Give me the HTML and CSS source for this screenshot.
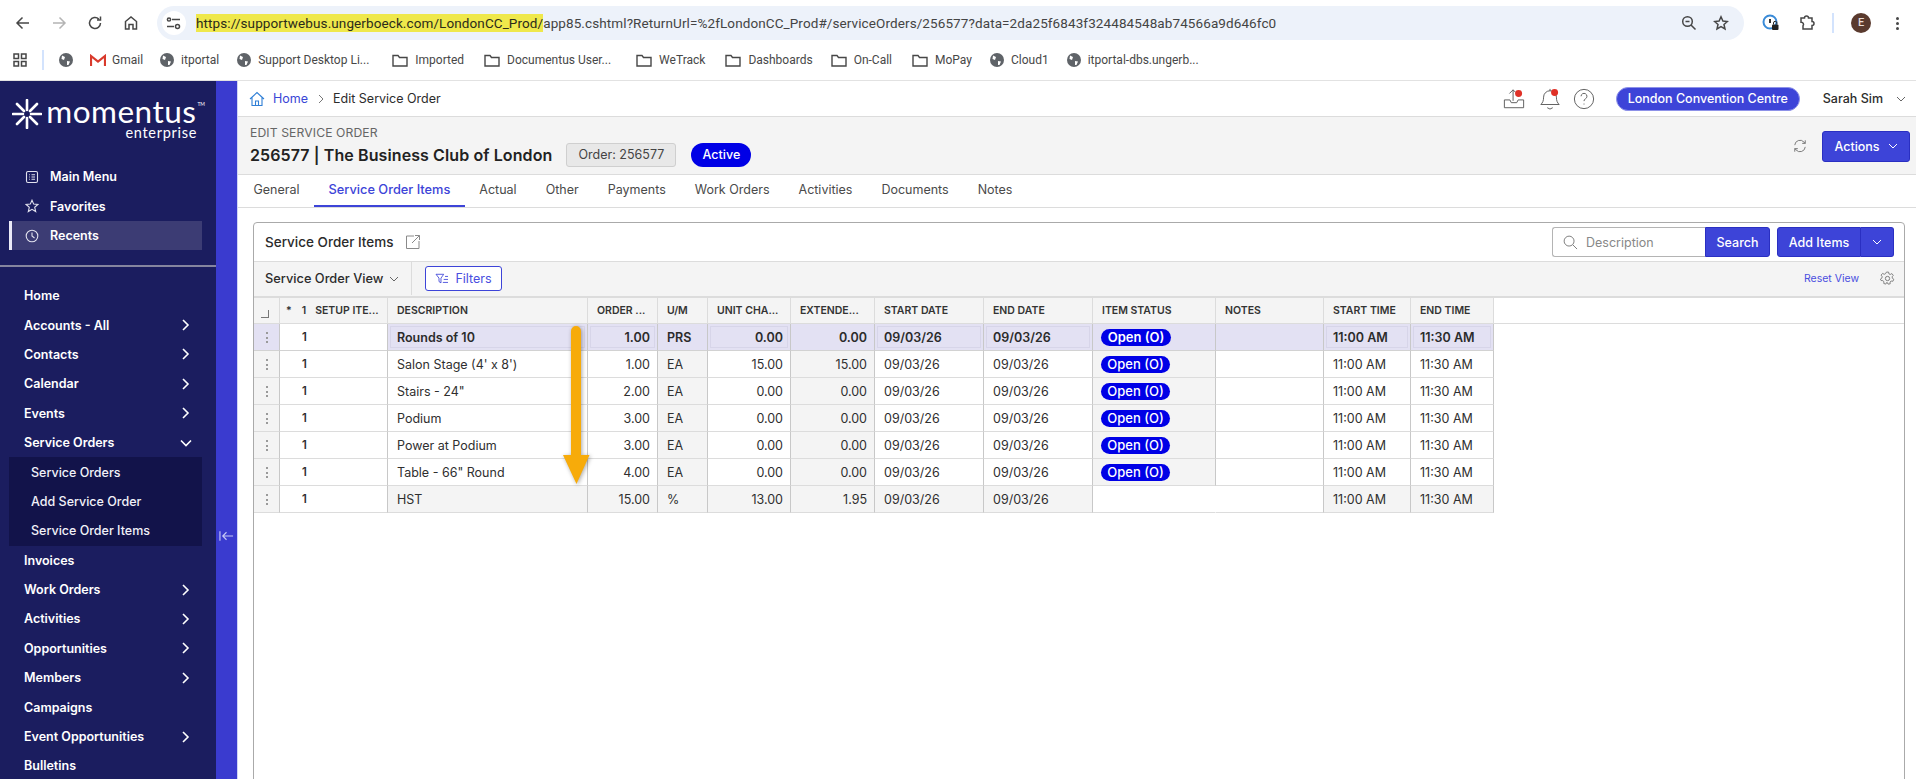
FILE: index.html
```html
<!DOCTYPE html>
<html lang="en">
<head>
<meta charset="utf-8">
<title>Edit Service Order</title>
<link rel="stylesheet" href="styles.css">
</head>
<body>
<header class="chrome">
  <div class="toolbar">
    <span class="nav-btn"><svg viewBox="0 0 16 16" class="ic16 stroke-dark"><path d="M14 8H2M7.5 2.5 2 8l5.5 5.5"/></svg></span>
    <span class="nav-btn"><svg viewBox="0 0 16 16" class="ic16 stroke-faint"><path d="M2 8h12M8.500 2.500 14 8l-5.500 5.500"/></svg></span>
    <span class="nav-btn"><svg viewBox="0 0 16 16" class="ic16 stroke-dark"><path d="M13.500 8a5.500 5.500 0 1 1-1.700-4M13.500 1.500V5H10"/></svg></span>
    <span class="nav-btn"><svg viewBox="0 0 16 16" class="ic16 stroke-dark"><path d="M2.500 14V6.500L8 2l5.500 4.500V14H10V9.500H6V14z"/></svg></span>
    <div class="urlbar">
      <span class="site-btn"><svg viewBox="0 0 16 16" class="ic16 stroke-dark"><path d="M6 4.500h8M1 11.500h7"/><circle cx="3" cy="4.500" r="1.600"/><circle cx="11.500" cy="11.500" r="2"/></svg></span>
      <span class="url"><span class="url-hl">https://supportwebus.ungerboeck.com/LondonCC_Prod/</span>app85.cshtml?ReturnUrl=%2fLondonCC_Prod#/serviceOrders/256577?data=2da25f6843f324484548ab74566a9d646fc0</span>
      <span class="url-tools">
        <span class="url-tool"><svg viewBox="0 0 16 16" class="ic16 stroke-dark"><circle cx="6.500" cy="6.500" r="4.800"/><path d="M10 10l4.500 4.500M4.500 6.500h4"/></svg></span>
        <span class="url-tool"><svg viewBox="0 0 16 16" class="ic16 stroke-dark"><path d="M8 1.800l1.900 4.200 4.500.5-3.400 3 1 4.500L8 11.700 4 14l1-4.500-3.400-3 4.500-.5z"/></svg></span>
      </span>
    </div>
    <div class="ext-group">
      <span class="ext"><svg viewBox="0 0 18 18" class="ic18"><circle cx="8" cy="8" r="6.500" fill="none" stroke="#3a8bd8" stroke-width="2"/><path d="M8 5v4" stroke="#333" stroke-width="2"/><rect x="10" y="10.500" width="6.500" height="5.500" rx="1" fill="#222"/><path d="M11.500 10.500V9a1.700 1.700 0 0 1 3.400 0v1.500" fill="none" stroke="#222"/></svg></span>
      <span class="ext"><svg viewBox="0 0 18 18" class="ic18 stroke-dark"><path d="M3 4h3.500a2 2 0 0 1 4 0H14v3.500a2 2 0 0 1 0 4V15H5v-3.200a2.200 2.200 0 0 0-2-3.600z"/></svg></span>
      <span class="ext-sep"></span>
      <span class="avatar-slot"><span class="avatar">E</span></span>
      <span class="more"><i></i><i></i><i></i></span>
    </div>
  </div>
  <nav class="bookmarks">
    <svg viewBox="0 0 14 14" class="apps"><path d="M1 1h4.500v4.500H1zM8.500 1H13v4.500H8.500zM1 8.500h4.500V13H1zM8.500 8.500H13V13H8.500z"/></svg>
    <span class="bm-sep"></span>
    <span class="bm bm-solo"><svg viewBox="0 0 14 14" class="globe"><circle cx="7" cy="7" r="7"/><path class="gl" d="M3 2.500 6 4 5 7 2.500 6zM8 8l3 .5-1.500 3.500L8 12z"/></svg></span>
    <span class="bm bm-gmail"><svg viewBox="0 0 16 13" class="gmail"><path d="M1 12V2l7 5.500L15 2v10" fill="none" stroke="#d93a2c" stroke-width="2.200"/></svg>Gmail</span>
    <span class="bm"><svg viewBox="0 0 14 14" class="globe"><circle cx="7" cy="7" r="7"/><path class="gl" d="M3 2.500 6 4 5 7 2.500 6zM8 8l3 .5-1.500 3.500L8 12z"/></svg>itportal</span>
    <span class="bm bm-m23"><svg viewBox="0 0 14 14" class="globe"><circle cx="7" cy="7" r="7"/><path class="gl" d="M3 2.500 6 4 5 7 2.500 6zM8 8l3 .5-1.500 3.500L8 12z"/></svg>Support Desktop Li...</span>
    <span class="bm bm-m20"><svg viewBox="0 0 16 13" class="folder"><path d="M1 12V1.500h5l1.500 2H15V12z"/></svg>Imported</span>
    <span class="bm bm-m25"><svg viewBox="0 0 16 13" class="folder"><path d="M1 12V1.500h5l1.500 2H15V12z"/></svg>Documentus User...</span>
    <span class="bm bm-m20"><svg viewBox="0 0 16 13" class="folder"><path d="M1 12V1.500h5l1.500 2H15V12z"/></svg>WeTrack</span>
    <span class="bm"><svg viewBox="0 0 16 13" class="folder"><path d="M1 12V1.500h5l1.500 2H15V12z"/></svg>Dashboards</span>
    <span class="bm bm-m20"><svg viewBox="0 0 16 13" class="folder"><path d="M1 12V1.500h5l1.500 2H15V12z"/></svg>On-Call</span>
    <span class="bm"><svg viewBox="0 0 16 13" class="folder"><path d="M1 12V1.500h5l1.500 2H15V12z"/></svg>MoPay</span>
    <span class="bm"><svg viewBox="0 0 14 14" class="globe"><circle cx="7" cy="7" r="7"/><path class="gl" d="M3 2.500 6 4 5 7 2.500 6zM8 8l3 .5-1.500 3.500L8 12z"/></svg>Cloud1</span>
    <span class="bm"><svg viewBox="0 0 14 14" class="globe"><circle cx="7" cy="7" r="7"/><path class="gl" d="M3 2.500 6 4 5 7 2.500 6zM8 8l3 .5-1.500 3.500L8 12z"/></svg>itportal-dbs.ungerb...</span>
  </nav>
</header>

<div class="app">
  <aside class="sidebar">
    <div class="logo">
      <svg viewBox="0 0 30 30" class="logo-star"><g stroke="#fff" stroke-width="2.600" stroke-linecap="round"><path d="M15 11V1M15 19v10M11 15H1M19 15h10M12 12 5 5M18 18l7 7M18 12l7-7M12 18l-7 7"/></g></svg>
      <div class="logo-text">
        <div class="logo-name"><span>momentus</span><span class="logo-tm">TM</span></div>
        <div class="logo-sub">enterprise</div>
      </div>
    </div>
    <ul class="quick">
      <li class="quick-item"><svg viewBox="0 0 14 14" class="q-ic"><rect x="1.500" y="1.500" width="11" height="11" rx="1.500"/><path d="M4 4.700h.8M4 7h.8M4 9.300h.8M6.500 4.700H10M6.500 7H10M6.500 9.300H10"/></svg>Main Menu</li>
      <li class="quick-item"><svg viewBox="0 0 14 14" class="q-ic"><path d="M7 1.200l1.700 3.900 4.200.4-3.200 2.800 1 4.200L7 10.300l-3.700 2.200 1-4.200L1.100 5.500l4.200-.4z"/></svg>Favorites</li>
      <li class="quick-item is-active"><svg viewBox="0 0 14 14" class="q-ic"><circle cx="7" cy="7" r="5.800"/><path d="M7 3.500V7l2.500 2"/></svg>Recents</li>
    </ul>
    <ul class="menu">
      <li class="menu-item">Home</li>
      <li class="menu-item has-kids">Accounts - All<svg viewBox="0 0 12 12" class="chev"><path d="M3 1l5 5-5 5"/></svg></li>
      <li class="menu-item has-kids">Contacts<svg viewBox="0 0 12 12" class="chev"><path d="M3 1l5 5-5 5"/></svg></li>
      <li class="menu-item has-kids">Calendar<svg viewBox="0 0 12 12" class="chev"><path d="M3 1l5 5-5 5"/></svg></li>
      <li class="menu-item has-kids">Events<svg viewBox="0 0 12 12" class="chev"><path d="M3 1l5 5-5 5"/></svg></li>
      <li class="menu-item has-kids">Service Orders<svg viewBox="0 0 12 12" class="chev"><path d="M1 3.500l5 5 5-5"/></svg></li>
      <li class="submenu">
        <div class="sub-item">Service Orders</div>
        <div class="sub-item">Add Service Order</div>
        <div class="sub-item">Service Order Items</div>
      </li>
      <li class="menu-item">Invoices</li>
      <li class="menu-item has-kids">Work Orders<svg viewBox="0 0 12 12" class="chev"><path d="M3 1l5 5-5 5"/></svg></li>
      <li class="menu-item has-kids">Activities<svg viewBox="0 0 12 12" class="chev"><path d="M3 1l5 5-5 5"/></svg></li>
      <li class="menu-item has-kids">Opportunities<svg viewBox="0 0 12 12" class="chev"><path d="M3 1l5 5-5 5"/></svg></li>
      <li class="menu-item has-kids">Members<svg viewBox="0 0 12 12" class="chev"><path d="M3 1l5 5-5 5"/></svg></li>
      <li class="menu-item">Campaigns</li>
      <li class="menu-item has-kids">Event Opportunities<svg viewBox="0 0 12 12" class="chev"><path d="M3 1l5 5-5 5"/></svg></li>
      <li class="menu-item">Bulletins</li>
    </ul>
  </aside>
  <div class="strip"><svg viewBox="0 0 16 12" class="strip-ic"><path d="M1 1v10M15 6H4M8 2 4 6l4 4"/></svg></div>

  <main class="main">
    <div class="topbar">
      <div class="crumbs">
        <svg viewBox="0 0 16 16" class="crumb-home"><path d="M1 8 8 1.500 15 8M3 6.500V14.500h10V6.500M6.500 14.500V10h3v4.500"/></svg>
        <span class="crumb-link">Home</span>
        <svg viewBox="0 0 10 10" class="crumb-chev"><path d="M3 1l4 4-4 4"/></svg>
        <span class="crumb-cur">Edit Service Order</span>
      </div>
      <div class="top-right">
        <span class="top-ic ic-upload"><svg viewBox="0 0 24 24"><path class="ln" d="M1.500 13v8.500h21V13h-6l-1.500 3H9l-1.500-3zM11 14V2M7 6l4-4 3 3"/><circle class="dot" cx="17" cy="6" r="3.800"/></svg></span>
        <span class="top-ic ic-bell"><svg viewBox="0 0 24 24"><path class="ln" d="M2 18c2-2 3-4 3-8a7 7 0 0 1 14 0c0 4 1 6 3 8zM9 21.500l3 1.500 3-1.500M12 3V1"/><circle class="dot" cx="17" cy="5" r="3.800"/></svg></span>
        <span class="top-ic ic-help"><svg viewBox="0 0 24 24"><circle class="ln" cx="12" cy="12" r="10.500"/><path class="ln" d="M8.800 9a3.200 3.200 0 1 1 4.800 2.800c-1 .6-1.600 1.200-1.600 2.500M12 17v1"/></svg></span>
        <span class="venue">London Convention Centre</span>
        <span class="user">Sarah Sim</span>
        <svg viewBox="0 0 10 10" class="user-chev"><path d="M1 3l4 4 4-4"/></svg>
      </div>
    </div>

    <div class="subhead">
      <div class="subhead-left">
        <div class="eyebrow">Edit Service Order</div>
        <div class="title-row">
          <h1 class="title">256577 | The Business Club of London</h1>
          <span class="order-tag">Order: 256577</span>
          <span class="active-pill">Active</span>
        </div>
      </div>
      <div class="subhead-right">
        <svg viewBox="0 0 16 16" class="refresh"><path d="M2 7a6 6 0 0 1 10.500-3.500L14 5M14 9a6 6 0 0 1-10.500 3.500L2 11M14 1.500V5h-3.500M2 14.500V11h3.500"/></svg>
        <button class="btn btn-actions">Actions<svg viewBox="0 0 10 10" class="btn-chev"><path d="M1 3l4 4 4-4"/></svg></button>
      </div>
    </div>

    <div class="tabs">
      <span class="tab">General</span>
      <span class="tab is-current">Service Order Items</span>
      <span class="tab">Actual</span>
      <span class="tab">Other</span>
      <span class="tab">Payments</span>
      <span class="tab">Work Orders</span>
      <span class="tab">Activities</span>
      <span class="tab">Documents</span>
      <span class="tab">Notes</span>
    </div>

    <div class="content">
      <section class="panel">
        <div class="panel-head">
          <div class="panel-title">Service Order Items<svg viewBox="0 0 16 16" class="ext-link"><path d="M9 2H1.500v12.500H14V7M7 9l7.500-7.500M10 1.500h4.500V6"/></svg></div>
          <div class="panel-actions">
            <div class="search-box"><svg viewBox="0 0 16 16" class="search-ic"><circle cx="6.500" cy="6.500" r="5.300"/><path d="M10.500 10.500l4.500 4.500"/></svg><span class="search-ph">Description</span></div>
            <button class="btn btn-search">Search</button>
            <button class="btn btn-add">Add Items</button><button class="btn btn-add-more"><svg viewBox="0 0 10 10" class="btn-chev"><path d="M1 3l4 4 4-4"/></svg></button>
          </div>
        </div>
        <div class="panel-tools">
          <div class="view-select">Service Order View<svg viewBox="0 0 10 10" class="view-chev"><path d="M1 3l4 4 4-4"/></svg></div>
          <button class="btn-filter"><svg viewBox="0 0 16 14" class="filter-ic"><path d="M1 1.500h9L6.800 6v5.500L4.500 10V6zM11.500 4H15M10 7.500h5M9 11h6"/></svg>Filters</button>
          <span class="tools-right">
            <span class="reset">Reset View</span>
            <svg viewBox="0 0 16 16" class="gear"><circle cx="8" cy="8" r="2.300"/><path d="M6.800 1h2.400l.4 2 1.500.7 1.800-1 1.600 2-1.300 1.600.3 1.700 1.600 1-1 2.300-2-.3-1.200 1.200.1 2-2.400.3-.9-1.800H7.100l-1 1.800-2.300-.7.2-2-1.200-1.200-2-.1L0 8.900l1.700-1.100.3-1.700L.8 4.400l1.700-1.900 1.800 1 1.500-.7z" transform="translate(.4 .2) scale(.95)"/></svg>
          </span>
        </div>
        <div class="grid-wrap">
          <table class="grid">
            <colgroup>
              <col class="c-sel"><col class="c-setup"><col class="c-desc"><col class="c-qty"><col class="c-um"><col class="c-unit"><col class="c-ext"><col class="c-date1"><col class="c-date2"><col class="c-status"><col class="c-notes"><col class="c-time1"><col class="c-time2"><col>
            </colgroup>
            <thead>
              <tr>
                <th><span class="corner"></span></th>
                <th class="th-setup"><span class="star">*</span><span class="sort">1</span>SETUP ITE...</th>
                <th>DESCRIPTION</th><th>ORDER ...</th><th>U/M</th><th>UNIT CHA...</th><th>EXTENDE...</th><th>START DATE</th><th>END DATE</th><th>ITEM STATUS</th><th>NOTES</th><th>START TIME</th><th>END TIME</th><th class="th-fill"></th>
              </tr>
            </thead>
            <tbody>
              <tr class="row-sel">
                <td class="sel"><i class="dots"></i></td><td class="setup">1</td><td class="box">Rounds of 10</td><td class="box num">1.00</td><td>PRS</td><td class="box num">0.00</td><td class="num">0.00</td><td class="box">09/03/26</td><td class="box">09/03/26</td><td><span class="pill">Open (O)</span></td><td></td><td class="box">11:00 AM</td><td class="box">11:30 AM</td><td class="fill"></td>
              </tr>
              <tr>
                <td class="sel"><i class="dots"></i></td><td class="setup">1</td><td>Salon Stage (4' x 8')</td><td class="num">1.00</td><td class="gray">EA</td><td class="num">15.00</td><td class="num gray">15.00</td><td>09/03/26</td><td>09/03/26</td><td class="gray"><span class="pill">Open (O)</span></td><td></td><td>11:00 AM</td><td>11:30 AM</td><td class="fill"></td>
              </tr>
              <tr>
                <td class="sel"><i class="dots"></i></td><td class="setup">1</td><td>Stairs - 24"</td><td class="num">2.00</td><td class="gray">EA</td><td class="num">0.00</td><td class="num gray">0.00</td><td>09/03/26</td><td>09/03/26</td><td class="gray"><span class="pill">Open (O)</span></td><td></td><td>11:00 AM</td><td>11:30 AM</td><td class="fill"></td>
              </tr>
              <tr>
                <td class="sel"><i class="dots"></i></td><td class="setup">1</td><td>Podium</td><td class="num">3.00</td><td class="gray">EA</td><td class="num">0.00</td><td class="num gray">0.00</td><td>09/03/26</td><td>09/03/26</td><td class="gray"><span class="pill">Open (O)</span></td><td></td><td>11:00 AM</td><td>11:30 AM</td><td class="fill"></td>
              </tr>
              <tr>
                <td class="sel"><i class="dots"></i></td><td class="setup">1</td><td>Power at Podium</td><td class="num">3.00</td><td class="gray">EA</td><td class="num">0.00</td><td class="num gray">0.00</td><td>09/03/26</td><td>09/03/26</td><td class="gray"><span class="pill">Open (O)</span></td><td></td><td>11:00 AM</td><td>11:30 AM</td><td class="fill"></td>
              </tr>
              <tr>
                <td class="sel"><i class="dots"></i></td><td class="setup">1</td><td>Table - 66" Round</td><td class="num">4.00</td><td class="gray">EA</td><td class="num">0.00</td><td class="num gray">0.00</td><td>09/03/26</td><td>09/03/26</td><td class="gray"><span class="pill">Open (O)</span></td><td></td><td>11:00 AM</td><td>11:30 AM</td><td class="fill"></td>
              </tr>
              <tr class="row-tax">
                <td class="sel"><i class="dots"></i></td><td class="setup">1</td><td>HST</td><td class="num">15.00</td><td>%</td><td class="num">13.00</td><td class="num">1.95</td><td>09/03/26</td><td>09/03/26</td><td class="blank no-rule"></td><td class="blank"></td><td>11:00 AM</td><td>11:30 AM</td><td class="fill"></td>
              </tr>
            </tbody>
          </table>
          <svg viewBox="0 0 38 166" class="arrow"><path d="M13 8a5 5 0 0 1 10 0v124h8.500L18.500 161 5 132h8z"/></svg>
        </div>
      </section>
    </div>
  </main>
</div>
</body>
</html>
```
FILE: styles.css
```css
* { box-sizing: border-box; }
html, body { margin: 0; padding: 0; }
body {
  width: 1916px;
  height: 779px;
  overflow: hidden;
  background: #fff;
  font-family: "Inter", "Liberation Sans", sans-serif;
  color: #2c2c2c;
}
ul { list-style: none; margin: 0; padding: 0; }
svg { display: block; flex: none; }
button { font-family: inherit; cursor: pointer; }

/* browser chrome */
.chrome { height: 81px; border-bottom: 1px solid #e2e2e2; background: #fff; }
.toolbar { height: 40px; padding: 6px 0 0 5px; display: flex; align-items: stretch; }
.nav-btn { width: 36px; display: flex; align-items: center; justify-content: center; }
.ic16 { width: 16px; height: 16px; }
.ic18 { width: 18px; height: 18px; }
.stroke-dark, .stroke-faint { fill: none; stroke: #474747; stroke-width: 1.500; }
.stroke-faint { stroke: #b4b4b4; }
.urlbar {
  width: 1587px;
  margin-left: 8px;
  background: #edf2fa;
  border-radius: 17px;
  display: flex;
  align-items: center;
  padding-left: 5px;
  font-family: "Roboto", sans-serif;
}
.site-btn { width: 24px; height: 24px; border-radius: 50%; background: #fff; display: flex; align-items: center; justify-content: center; }
.url { margin-left: 10px; font-size: 13.500px; color: #444; letter-spacing: 0.1px; white-space: nowrap; }
.url-hl { display: inline-block; line-height: 18px; background: #efe84b; color: #2b2b1a; }
.url-tools { margin-left: auto; padding-right: 7px; display: flex; }
.url-tool { width: 32px; display: flex; justify-content: center; }
.ext-group { display: flex; padding-left: 9px; align-items: center; }
.ext { width: 36px; display: flex; justify-content: center; }
.ext-sep { width: 16px; height: 20px; position: relative; display: flex; justify-content: center; }
.ext-sep::before { content: ""; width: 2px; height: 20px; background: #d3e3fd; }
.avatar-slot { width: 40px; display: flex; justify-content: center; }
.avatar { width: 20px; height: 20px; border-radius: 50%; background: #5a3a2e; color: #e8dcd6; font: 500 11px/20px "Roboto", sans-serif; text-align: center; }
.more { width: 32px; display: flex; flex-direction: column; align-items: center; gap: 2px; }
.more i { width: 3px; height: 3px; background: #474747; border-radius: 50%; }

.bookmarks {
  height: 40px;
  padding-left: 13px;
  display: flex;
  align-items: center;
  font-family: "Roboto", sans-serif;
  font-size: 12px;
  color: #474747;
  white-space: nowrap;
}
.apps { width: 14px; height: 14px; fill: none; stroke: #474747; stroke-width: 1.500; }
.bm-sep { width: 2px; height: 20px; background: #d3e3fd; margin: 0 15px; }
.bm { display: flex; align-items: center; gap: 7px; margin-right: 18px; }
.bm-solo { margin-right: 17px; }
.bm-gmail { gap: 6px; margin-right: 17px; }
.bm-m23 { margin-right: 23px; }
.bm-m20 { margin-right: 20px; }
.bm-m25 { margin-right: 25px; }
.globe { width: 14px; height: 14px; fill: #5f6368; }
.gl { fill: #fff; }
.gmail { width: 16px; height: 13px; }
.folder { width: 16px; height: 13px; fill: none; stroke: #474747; stroke-width: 1.400; }

/* app frame */
.app { height: 698px; display: flex; overflow: hidden; }
.sidebar { width: 216px; flex: none; background: #1b1d5f; color: #fff; }
.strip { width: 22px; flex: none; background: #3a3bcf; padding-top: 449px; display: flex; justify-content: center; border-right: 1px solid #cfd4f5; }
.strip-ic { width: 15px; height: 12px; fill: none; stroke: #c6c8f5; stroke-width: 1.200; }

.logo { height: 81px; padding: 16px 0 0 12px; display: flex; align-items: flex-start; }
.logo-star { width: 30px; height: 30px; margin-top: 2px; }
.logo-text { margin-left: 5px; width: 158px; text-align: right; font-family: "Lato", sans-serif; }
.logo-name { height: 28px; font-size: 31.500px; line-height: 28px; letter-spacing: 0.5px; display: flex; justify-content: flex-end; white-space: nowrap; }
.logo-tm { align-self: flex-start; margin: 4px 0 0 1px; font-size: 5px; line-height: 6px; letter-spacing: 0; }
.logo-sub { font-size: 14.500px; line-height: 15px; letter-spacing: 0.7px; padding-right: 8px; }

.quick { padding-bottom: 15px; border-bottom: 2px solid #85859f; height: 105px; }
.quick-item { height: 29px; margin-left: 9px; width: 193px; padding-left: 16px; display: flex; align-items: center; font-size: 12.500px; font-weight: 600; }
.quick-item:nth-child(2) { height: 30px; }
.q-ic { width: 14px; height: 14px; margin-right: 11px; fill: none; stroke: #e2e2ee; stroke-width: 1.100; }
.is-active { background: #3c3c74; border-left: 3px solid #ecebf7; padding-left: 13px; }

.menu { padding-top: 14px; }
.menu-item { height: 29.400px; padding: 0 24px 0 24px; display: flex; align-items: center; justify-content: space-between; font-size: 12.500px; font-weight: 600; }
.chev { width: 12px; height: 12px; fill: none; stroke: #fff; stroke-width: 1.600; }
.submenu { margin: 0 14px 0 9px; background: #12134a; }
.sub-item { height: 29.400px; padding-left: 22px; display: flex; align-items: center; font-size: 12.500px; font-weight: 500; color: #f1f1f8; }

/* main */
.main { flex: 1; min-width: 0; display: flex; flex-direction: column; }
.topbar { height: 36px; flex: none; padding: 0 14px 0 11px; border-bottom: 1px solid #dcdcdc; display: flex; align-items: center; justify-content: space-between; }
.crumbs { display: flex; align-items: center; font-size: 12.500px; }
.crumb-home { width: 16px; height: 16px; fill: none; stroke: #2f7fd6; stroke-width: 1.100; margin-right: 8px; }
.crumb-link { color: #3a46d6; }
.crumb-chev { width: 10px; height: 10px; margin: 0 7px 0 8px; fill: none; stroke: #777; stroke-width: 1; }
.crumb-cur { color: #2c2c2c; }
.top-right { display: flex; align-items: center; font-size: 12.500px; }
.top-ic { width: 22px; height: 24px; display: block; }
.top-ic svg { width: 22px; height: 24px; }
.ln { fill: none; stroke: #555; stroke-width: 1; }
.dot { fill: #e03127; }
.ic-bell { margin-left: 14px; }
.ic-help { margin-left: 12px; }
.venue { margin-left: 21px; width: 184px; height: 24px; line-height: 22px; text-align: center; border-radius: 12px; background: #3d44d8; border: 1px solid #8e92e8; color: #fff; font-weight: 500; }
.user { margin-left: 23px; font-weight: 500; color: #2c2c2c; }
.user-chev { width: 10px; height: 10px; margin-left: 13px; margin-right: -4px; fill: none; stroke: #666; stroke-width: 1; }

.subhead { height: 58px; flex: none; padding: 8px 6px 0 12px; background: #f4f4f4; border-bottom: 1px solid #dcdcdc; display: flex; justify-content: space-between; }
.eyebrow { height: 16px; line-height: 16px; font-size: 12.200px; color: #666; text-transform: uppercase; letter-spacing: 0.1px; }
.title-row { margin-top: 2px; height: 24px; display: flex; align-items: center; }
.title { margin: 0; font-size: 16px; font-weight: 600; letter-spacing: 0.1px; color: #222; white-space: nowrap; }
.order-tag { margin-left: 14px; width: 110px; height: 24px; line-height: 22px; text-align: center; background: #e8e8e8; border: 1px solid #cfcfcf; border-radius: 3px; font-size: 12.500px; color: #444; }
.active-pill { margin-left: 15px; width: 60px; height: 24px; line-height: 24px; text-align: center; background: #0000e6; color: #fff; border-radius: 12px; font-size: 12.500px; font-weight: 500; }
.subhead-right { display: flex; align-items: center; height: 42px; }
.refresh { width: 14px; height: 14px; fill: none; stroke: #777; stroke-width: 1.100; margin-right: 15px; }
.btn { border: 1px solid #2a2fc2; background: #3d44d8; color: #fff; font-size: 12.500px; font-weight: 500; padding: 0; }
.btn-actions { width: 88px; height: 31px; border-radius: 3px; display: flex; align-items: center; justify-content: center; }
.btn-chev { width: 10px; height: 10px; fill: none; stroke: #fff; stroke-width: 1; }
.btn-actions .btn-chev { margin-left: 8px; }

.tabs { height: 33px; flex: none; padding-left: 1px; border-bottom: 1px solid #dcdcdc; display: flex; }
.tab { height: 32px; padding: 0 14.500px; line-height: 30px; font-size: 12.500px; color: #4a4a4a; white-space: nowrap; }
.tab.is-current { font-size: 12.800px; color: #3d44d8; font-weight: 500; border-bottom: 2px solid #3d44d8; }

.content { flex: 1; min-height: 0; padding: 14px 11px 0 15px; overflow: hidden; }
.panel { height: 600px; border: 1px solid #aaa; border-radius: 4px; }
.panel-head { height: 39px; padding: 4px 10px 0 11px; border-bottom: 1px solid #dcdcdc; display: flex; justify-content: space-between; align-items: flex-start; }
.panel-title { height: 30px; display: flex; align-items: center; font-size: 13.500px; font-weight: 500; color: #2b2b2b; }
.ext-link { width: 16px; height: 16px; margin-left: 11px; fill: none; stroke: #8a8a8a; stroke-width: 1; }
.panel-actions { display: flex; height: 30px; }
.search-box { width: 153px; border: 1px solid #b4b4b4; border-right: 0; border-radius: 3px 0 0 3px; display: flex; align-items: center; padding-left: 10px; }
.search-ic { width: 15px; height: 15px; fill: none; stroke: #777; stroke-width: 1; }
.search-ph { margin-left: 8px; font-size: 12.500px; color: #888; }
.btn-search { width: 65px; border-radius: 0 3px 3px 0; }
.btn-add { width: 84px; margin-left: 7px; border-radius: 3px 0 0 3px; border-right: 1px solid #2a2fc2; }
.btn-add-more { width: 33px; border-radius: 0 3px 3px 0; display: flex; align-items: center; justify-content: center; border-left: 0; }

.panel-tools { height: 35px; background: #f4f4f4; padding: 0 0 2px 11px; display: flex; align-items: center; }
.view-select { width: 147px; height: 33px; border-right: 1px solid #dcdcdc; display: flex; align-items: center; font-size: 12.800px; font-weight: 500; color: #2b2b2b; }
.view-chev { width: 10px; height: 10px; margin-left: 6px; fill: none; stroke: #666; stroke-width: 1; }
.btn-filter { margin-left: 13px; width: 77px; height: 25px; padding: 0; background: #fff; border: 1px solid #3d44d8; border-radius: 3px; color: #4a4ee0; font-size: 12.500px; display: flex; align-items: center; justify-content: center; }
.filter-ic { width: 14px; height: 12px; margin-right: 6px; fill: none; stroke: #3d44d8; stroke-width: 1; }
.tools-right { margin-left: auto; padding-right: 9px; display: flex; align-items: center; }
.reset { font-size: 10.500px; color: #4a4ee0; }
.gear { width: 15px; height: 15px; margin-left: 21px; fill: none; stroke: #777; stroke-width: 1; }

.grid-wrap { position: relative; border-top: 2px solid #dcdcdc; margin-top: -1px; }
.grid { width: 100%; table-layout: fixed; border-collapse: separate; border-spacing: 0; font-size: 12.500px; color: #2f2f2f; }
.c-sel { width: 26px; } .c-setup { width: 108px; } .c-desc { width: 200px; } .c-qty { width: 70px; }
.c-um { width: 50px; } .c-unit { width: 83px; } .c-ext { width: 84px; } .c-date1 { width: 109px; }
.c-date2 { width: 109px; } .c-status { width: 123px; } .c-notes { width: 108px; } .c-time1 { width: 87px; } .c-time2 { width: 83px; }
.grid th { height: 26px; padding: 0 0 0 9px; background: #f4f4f4; border-right: 1px solid #dcdcdc; border-bottom: 1px solid #dcdcdc; font-size: 10.500px; font-weight: 600; text-align: left; color: #333; white-space: nowrap; overflow: hidden; }
.grid .th-fill { background: #fff; border-right: 0; }
.grid .th-setup { padding-left: 6px; }
.star { margin-right: 10px; }
.sort { margin-right: 9px; }
.corner { display: block; width: 8px; height: 8px; margin: 7px 0 0 -2px; border-right: 1px solid #777; border-bottom: 1px solid #777; }
.grid td { height: 27px; padding: 0 7px 0 9px; border-right: 1px solid #c8c8c8; border-bottom: 1px solid #dcdcdc; white-space: nowrap; }
.grid .num { text-align: right; }
.grid .gray { background: #f4f4f4; }
.grid .sel { background: #f4f4f4; padding: 0; }
.grid .setup { background: #fff; padding-left: 22px; font-weight: 600; font-size: 11.500px; }
.grid .fill { border: 0; background: #fff; }
.dots { display: block; width: 2px; height: 11px; margin: 0 auto; border-left: 2px dotted #9a9a9a; }
.row-sel td { background: #e3e1f3; font-weight: 600; border-bottom-color: #d2d2d2; color: #2b2b2b; }
.row-sel .box { box-shadow: inset 0 0 0 2px #e3e1f3, inset 0 0 0 3px #d7d5e9; }
.row-sel .sel { background: #e3e1f3; }
.row-tax td { background: #f4f4f4; }
.row-tax .blank { background: #fff; }
.row-tax .no-rule { border-right-color: #fff; }
.pill { display: block; width: 69px; height: 17px; line-height: 17px; margin-left: -1px; text-align: center; border-radius: 9px; background: #0000e6; color: #fff; font-size: 13px; font-weight: 500; }
.row-sel .pill { font-weight: 600; width: 70px; }
.arrow { position: absolute; left: 304px; top: 25px; width: 38px; height: 166px; fill: #f7ab0a; filter: drop-shadow(1px 1px 2px rgba(0,0,0,.35)); }
```
